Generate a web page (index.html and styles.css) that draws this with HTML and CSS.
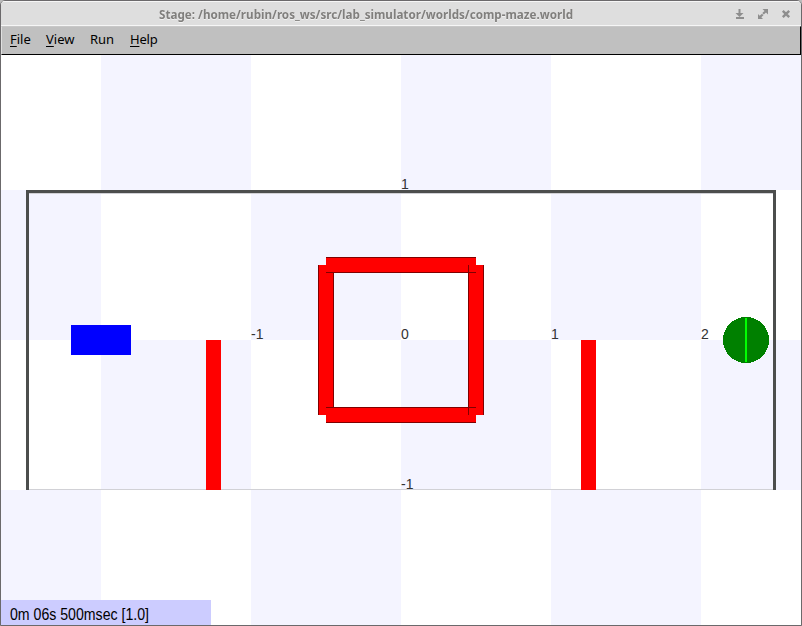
FILE: index.html
```
<!DOCTYPE html>
<html lang="en">
<head>
<meta charset="utf-8">
<title>Stage</title>
<link rel="stylesheet" href="styles.css">
</head>
<body>
<div class="window">
  <header class="titlebar">
    <svg class="title" width="440" height="24" viewBox="147 1 440 24"><text class="title-text" x="159" y="19" textLength="414" lengthAdjust="spacingAndGlyphs">Stage: /home/rubin/ros_ws/src/lab_simulator/worlds/comp-maze.world</text></svg>
    <svg class="controls" width="60" height="24" viewBox="734 1 60 24">
      <path d="M738.5 9h2v4h3l-4 4-4-4h3zM736 17h8v2h-8z"/>
      <path d="M762.5 9h5.500v5.500l-2-2-2.200 2-1.500-1.500 2.200-2zM763 19h-5v-5l1.700 1.700 2.300-2 1.500 1.500-2.200 2z"/>
      <path class="cross" d="M782.800 10.800l6.400 6.400M789.200 10.800l-6.400 6.400"/>
    </svg>
  </header>
  <nav class="menubar">
    <span class="item file"><u>F</u>ile</span>
    <span class="item view"><u>V</u>iew</span>
    <span class="item run">Run</span>
    <span class="item help"><u>H</u>elp</span>
  </nav>
  <svg class="world" width="800" height="570" viewBox="1 55 800 570" shape-rendering="crispEdges">
    <path class="tile" d="M101 55h150v135h-150zM401 55h150v135h-150zM701 55h100v135h-100zM1 190h100v150h-100zM251 190h150v150h-150zM551 190h150v150h-150zM101 340h150v150h-150zM401 340h150v150h-150zM701 340h100v150h-100zM1 490h100v135h-100zM251 490h150v135h-150zM551 490h150v135h-150z"/>
    <path class="edge" d="M29 193h744v1h-744zM29 489h744v1h-744z"/>
    <path class="wall" d="M26 190h750v300h-3v-297h-744v297h-3z"/>
    <g class="label">
      <text x="401" y="189">1</text><text x="251" y="339">-1</text><text x="401" y="339">0</text><text x="551" y="339">1</text><text x="701" y="339">2</text><text x="401" y="489">-1</text>
    </g>
    <path class="red" d="M206 340h15v150h-15zM581 340h15v150h-15zM318 265h16v150h-16zM468 265h16v150h-16zM326 257h150v16h-150zM326 407h150v16h-150z"/>
    <path class="outline" d="M326 257h150v1h-150zM326 272h150v1h-150zM326 407h150v1h-150zM326 422h150v1h-150zM318 265h1v150h-1zM333 273h1v134h-1zM468 265h1v150h-1zM483 265h1v150h-1z"/>
    <path class="blue" d="M71 325h60v30h-60z"/>
    <circle class="robot" cx="746" cy="340" r="23"/>
    <path class="heading" d="M745 318h2v44h-2z"/>
    <path class="clock" d="M1 600h210v25h-210z"/>
    <text class="time" x="10" y="619.500" textLength="139" lengthAdjust="spacingAndGlyphs">0m 06s 500msec [1.0]</text>
  </svg>
</div>
</body>
</html>
```
FILE: styles.css
```
body { margin: 0; background: #bbb; overflow: hidden; }
.window {
  box-sizing: border-box;
  width: 802px;
  height: 626px;
  border: 1px solid #6b696b;
  border-radius: 5px 5px 0 0;
  background: #fff;
  overflow: hidden;
}
.titlebar {
  box-sizing: border-box;
  height: 25px;
  display: flex;
  justify-content: space-between;
  padding: 0 7px 0 146px;
  background: #dedede;
  box-shadow: inset 0 1px #f6f6f6, inset 0 -1px #f6f6f6;
}
.title {
  overflow: visible;
  font: bold 12px "Noto Sans", sans-serif;
  filter: drop-shadow(0 1px 0 #f0f0f0);
}
.title-text { fill: #807f7d; }
.controls { fill: #8e8e8e; }
.cross { stroke: #8e8e8e; stroke-width: 2.4; }
.menubar {
  box-sizing: border-box;
  height: 29px;
  display: flex;
  align-items: center;
  padding: 0 0 3px 8px;
  background: #c0c0c0;
  border: 1px solid #000;
  border-top-color: #c8c8c8;
  border-left-color: #e0e0e0;
  font: 13px/17px "Noto Sans", sans-serif;
  color: #000;
}
.item { white-space: nowrap; }
.item u { text-underline-offset: 2px; text-decoration-thickness: 1px; }
.file { width: 36px; }
.view { width: 44px; }
.run { width: 40px; }
.help { letter-spacing: -0.2px; }
.world { display: block; }
.tile { fill: #f4f4ff; }
.edge { fill: #d1d1d6; }
.wall { fill: #4c4e4d; }
.red { fill: #f00; }
.outline { fill: #800000; }
.blue { fill: #00f; }
.robot { fill: #008000; }
.heading { fill: #0f0; }
.clock { fill: #ccf; }
.label { font: 14px "Liberation Sans", sans-serif; fill: #333; }
.time { font: 16px "Liberation Sans", sans-serif; fill: #000; }
```
